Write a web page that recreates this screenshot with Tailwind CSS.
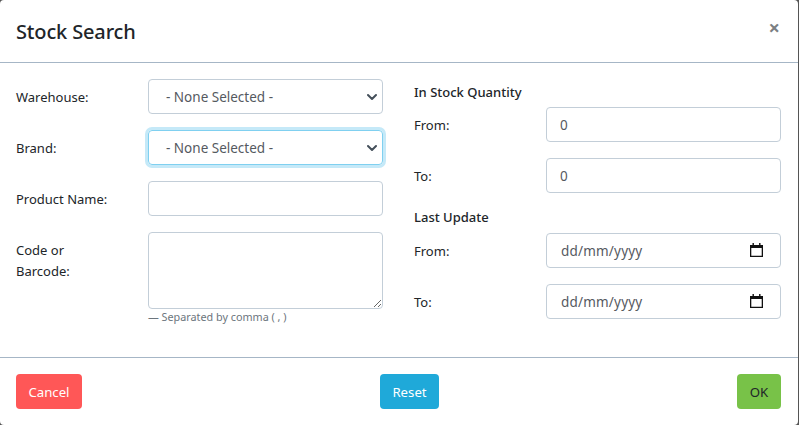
<!DOCTYPE html>
<html lang="en">
<head>
  <meta charset="UTF-8">
  <title>Stock Search</title>
  <script src="https://cdn.jsdelivr.net/npm/@tailwindcss/browser@4"></script>
</head>
<body class="bg-[#555] h-[425px] w-[799px] overflow-hidden font-['Noto_Sans',sans-serif] text-[#212529]">
  <div class="bg-white h-[425px] w-[798px] rounded-[4px] flex flex-col">

    <!-- Header -->
    <div class="h-[63px] flex-none border-b border-[#a6b6c6] pl-4 pr-[18px] flex items-center justify-between">
      <h5 class="text-[20px] font-medium tracking-[-0.15px] pt-[2px]">Stock Search</h5>
      <span class="text-[20px] font-bold leading-none text-[#7b7f83] mb-[6px]">×</span>
    </div>

    <!-- Body -->
    <div class="h-[295px] flex-none border-b border-[#a6b6c6] pt-4 pl-4 pr-[17px] flex gap-[31px] text-[13px]">
      <div class="w-[367px] flex flex-col gap-4">
        <div class="flex items-center h-[35px]">
          <label class="w-[132px] pt-[2px]">Warehouse:</label>
          <div class="relative w-[235px] h-[35px] border border-[#c3ced8] rounded-[4px] pl-[17px] pt-[2px] flex items-center text-[13.5px] text-[#55595f]">
            - None Selected -
            <svg class="absolute right-[5px] top-[12px]" width="10" height="10" viewBox="0 0 10 10"><path fill="none" stroke="#444f5a" stroke-width="2" stroke-linecap="round" stroke-linejoin="round" d="M1 3l4 4 4-4"/></svg>
          </div>
        </div>
        <div class="flex items-center h-[35px]">
          <label class="w-[132px] pt-[2px]">Brand:</label>
          <div class="relative w-[235px] h-[35px] border border-[#80d0f0] rounded-[4px] ring-[3px] ring-[#c5e9f8] pl-[17px] pt-[2px] flex items-center text-[13.5px] text-[#55595f]">
            - None Selected -
            <svg class="absolute right-[5px] top-[12px]" width="10" height="10" viewBox="0 0 10 10"><path fill="none" stroke="#444f5a" stroke-width="2" stroke-linecap="round" stroke-linejoin="round" d="M1 3l4 4 4-4"/></svg>
          </div>
        </div>
        <div class="flex items-center h-[35px]">
          <label class="w-[132px] pt-[2px]">Product Name:</label>
          <input type="text" class="w-[235px] h-[35px] border border-[#c3ced8] rounded-[4px]">
        </div>
        <div class="flex">
          <label class="w-[132px] pt-[8px] leading-[21px]">Code or<br>Barcode:</label>
          <div class="w-[235px]">
            <textarea class="block w-[235px] h-[77px] border border-[#c3ced8] rounded-[4px]"></textarea>
            <p class="text-[10.8px] text-[#6c757d] leading-[16px]">— Separated by comma ( , )</p>
          </div>
        </div>
      </div>

      <div class="w-[367px] flex flex-col">
        <h6 class="h-[28px] pt-[3px] font-medium leading-[21px]">In Stock Quantity</h6>
        <div class="flex items-center h-[35px]">
          <label class="w-[132px] pt-[2px]">From:</label>
          <div class="w-[235px] h-[35px] border border-[#c3ced8] rounded-[4px] pl-[13px] pt-[2px] flex items-center text-[13.5px] text-[#55595f]">0</div>
        </div>
        <div class="flex items-center h-[35px] mt-4">
          <label class="w-[132px] pt-[2px]">To:</label>
          <div class="w-[235px] h-[35px] border border-[#c3ced8] rounded-[4px] pl-[13px] pt-[2px] flex items-center text-[13.5px] text-[#55595f]">0</div>
        </div>
        <h6 class="h-[40px] pt-[14px] font-medium leading-[21px]">Last Update</h6>
        <div class="flex items-center h-[35px]">
          <label class="w-[132px] pt-[2px]">From:</label>
          <div class="relative w-[235px] h-[35px] border border-[#c3ced8] rounded-[4px] pl-[14px] pt-[2px] flex items-center text-[13.5px] tracking-[0.2px] text-[#55595f]">
            dd/mm/yyyy
            <svg class="absolute right-[17px] top-[9px]" width="13" height="14" viewBox="0 0 13 14"><path fill="#111" d="M2.5 0h1.4v2h5.2V0h1.4v2H13v12H0V2h2.5zM1.3 5v7.7h10.4V5z"/></svg>
          </div>
        </div>
        <div class="flex items-center h-[35px] mt-4">
          <label class="w-[132px] pt-[2px]">To:</label>
          <div class="relative w-[235px] h-[35px] border border-[#c3ced8] rounded-[4px] pl-[14px] pt-[2px] flex items-center text-[13.5px] tracking-[0.2px] text-[#55595f]">
            dd/mm/yyyy
            <svg class="absolute right-[17px] top-[9px]" width="13" height="14" viewBox="0 0 13 14"><path fill="#111" d="M2.5 0h1.4v2h5.2V0h1.4v2H13v12H0V2h2.5zM1.3 5v7.7h10.4V5z"/></svg>
          </div>
        </div>
      </div>
    </div>

    <!-- Footer -->
    <div class="flex-1 pt-4 pl-4 pr-[17px] flex items-start justify-between text-[13.2px]">
      <button class="w-[66px] h-[35px] pt-[2px] rounded-[4px] bg-[#ff5757] text-white">Cancel</button>
      <button class="w-[59px] h-[35px] pt-[2px] rounded-[4px] bg-[#1fa9d9] text-white">Reset</button>
      <button class="w-[44px] h-[35px] pt-[2px] rounded-[4px] bg-[#78c248] text-[#212529]">OK</button>
    </div>
  </div>
</body>
</html>
